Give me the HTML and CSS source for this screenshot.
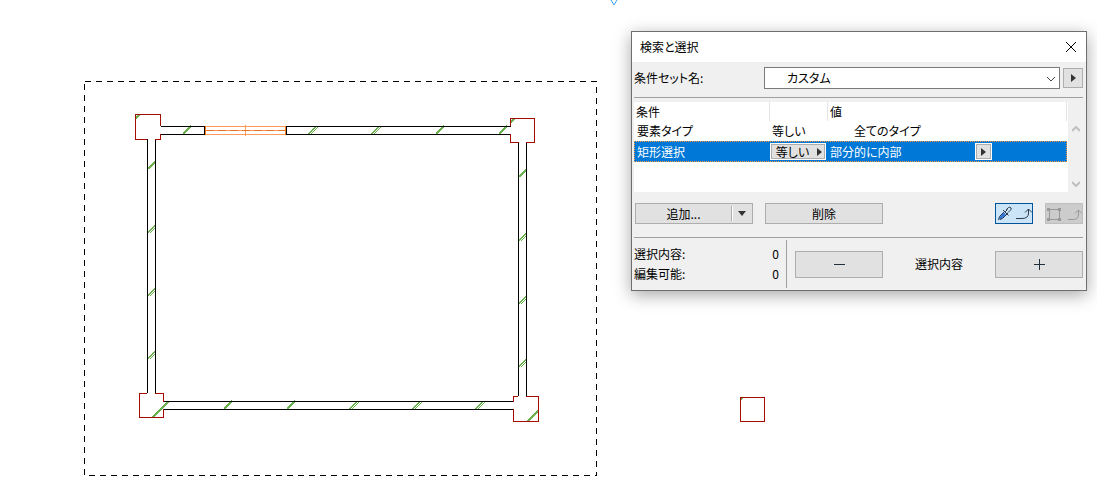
FILE: index.html
```html
<!DOCTYPE html>
<html lang="ja">
<head>
    <meta charset="UTF-8">
    <title>検索と選択</title>
    <link rel="stylesheet" href="styles.css">
</head>
<body>
    <main class="workspace">
        <svg class="plan" aria-hidden="true">
            <defs>
                <!-- hatch strokes across a wall -->
                <g id="hatch">
                    <path d="M0 8L8 0" stroke-width="2" />
                </g>
                <g id="hatch-double">
                    <path d="M0 8L8 0" />
                    <path d="M3 8L11 0" />
                    <path d="M1 8L9 0" />
                </g>
                <clipPath id="left-wall"><rect x="148" y="139" width="7" height="254" /></clipPath>
                <clipPath id="right-wall"><rect x="519" y="142" width="7" height="254" /></clipPath>
                <clipPath id="columns">
                    <rect x="136" y="115" width="24" height="24" />
                    <rect x="511" y="119" width="23" height="23" />
                    <rect x="140" y="402" width="30" height="15" />
                    <rect x="514" y="397" width="24" height="24" />
                    <rect x="741" y="398" width="23" height="23" />
                </clipPath>
            </defs>

            <!-- marker at the top edge -->
            <path class="marker" d="M611 0L614 5L617 0" />

            <!-- marquee -->
            <rect class="marquee" x="84.5" y="81.5" width="512" height="394" />

            <!-- hatching -->
            <g class="hatching">
                <use href="#hatch" x="183" y="126" />
                <use href="#hatch-double" x="308" y="126" />
                <use href="#hatch-double" x="371" y="126" />
                <use href="#hatch" x="436" y="126" />
                <use href="#hatch" x="499" y="126" />
                <use href="#hatch" x="224" y="401" />
                <use href="#hatch" x="287" y="401" />
                <use href="#hatch-double" x="349" y="401" />
                <use href="#hatch-double" x="412" y="401" />
                <use href="#hatch-double" x="475" y="401" />
                <g clip-path="url(#left-wall)">
                    <use href="#hatch" x="148" y="161" />
                    <use href="#hatch-double" x="147" y="225" />
                    <use href="#hatch-double" x="147" y="288" />
                    <use href="#hatch-double" x="147" y="351" />
                </g>
                <g clip-path="url(#right-wall)">
                    <use href="#hatch" x="519" y="169" />
                    <use href="#hatch-double" x="518" y="233" />
                    <use href="#hatch-double" x="518" y="296" />
                    <use href="#hatch-double" x="518" y="359" />
                </g>
                <g class="column-hatch" clip-path="url(#columns)">
                    <path d="M134 120L142 112M509 124L517 116M152 418L170 400M527 422L541 408M740 400L743 397" />
                </g>
            </g>

            <!-- walls -->
            <path class="wall" d="M161 126.5H204.500V134.500H161M511 126.500H286.500V134.500H511M163 401.500H513M163 409.500H513M147.500 139V393M155.500 139V393M518.500 142V396M526.500 142V396" />

            <!-- window -->
            <path class="window-frame" d="M206 126.500H286M206 134.500H286M206 130.500H286M245.500 125V136" />
            <path class="window-end" d="M205.500 126V135M285.500 126V135" />
            <path class="window-axis" d="M206 130.500H286" />

            <!-- columns -->
            <path class="column" d="M160.500 126V114.500H135.500V139.500H147M155 139.500H160.500V134" />
            <path class="column" d="M510.500 126V118.500H534.500V142.500H526M519 142.500H510.500V134" />
            <path class="column" d="M147 393.500H139.500V417.500H163.500V409M163.500 402V393.500H155" />
            <path class="column" d="M518 396.500H513.500V402M513.500 409V421.500H538.500V396.500H526" />
            <rect class="column" x="740.500" y="397.500" width="24" height="24" />
        </svg>

        <section class="dialog" role="dialog" aria-labelledby="dialog-title">
            <header class="title-bar">
                <h1 id="dialog-title">検索と選択</h1>
                <button type="button" class="close" aria-label="閉じる">
                    <svg width="12" height="12" viewBox="0 0 12 12"><path d="M1 1L11 11M11 1L1 11" /></svg>
                </button>
            </header>

            <div class="set-row">
                <label for="criteria-set">条件セット名:</label>
                <div class="select-box">
                    <select id="criteria-set">
                        <option>カスタム</option>
                    </select>
                    <svg class="chevron" width="10" height="6" viewBox="0 0 10 6"><path d="M1 1L5 5L9 1" /></svg>
                </div>
                <button type="button" class="btn arrow-btn" aria-label="条件セット">
                    <svg class="arrow" width="5" height="8" viewBox="0 0 5 8"><path d="M0 0L5 4L0 8z" /></svg>
                </button>
            </div>

            <div class="list">
                <div class="list-view">
                    <table class="criteria">
                        <colgroup>
                            <col class="col-name">
                            <col class="col-rule">
                            <col>
                        </colgroup>
                        <thead>
                            <tr>
                                <th>条件</th>
                                <th></th>
                                <th>値</th>
                            </tr>
                        </thead>
                        <tbody>
                            <tr>
                                <td>要素タイプ</td>
                                <td>等しい</td>
                                <td class="type-value">全てのタイプ</td>
                            </tr>
                            <tr class="selected">
                                <td>矩形選択</td>
                                <td class="rule-cell">
                                    <button type="button" class="btn cell-btn rule-btn">等しい
                                        <svg class="arrow" width="5" height="8" viewBox="0 0 5 8"><path d="M0 0L5 4L0 8z" /></svg>
                                    </button>
                                </td>
                                <td>
                                    <div class="value">
                                        <span>部分的に内部</span>
                                        <button type="button" class="btn cell-btn value-btn" aria-label="値">
                                            <svg class="arrow" width="5" height="8" viewBox="0 0 5 8"><path d="M0 0L5 4L0 8z" /></svg>
                                        </button>
                                    </div>
                                </td>
                            </tr>
                        </tbody>
                    </table>
                </div>
                <div class="scroll">
                    <svg width="8" height="6" viewBox="0 0 8 6"><path d="M0 5L4 1L8 5" /></svg>
                    <svg width="8" height="6" viewBox="0 0 8 6"><path d="M0 1L4 5L8 1" /></svg>
                </div>
            </div>

            <div class="actions">
                <div class="split">
                    <button type="button" class="btn">追加...</button>
                    <button type="button" class="btn split-menu" aria-label="追加メニュー">
                        <svg class="arrow" width="8" height="5" viewBox="0 0 8 5"><path d="M0 0H8L4 5z" /></svg>
                    </button>
                </div>
                <button type="button" class="btn">削除</button>
                <button type="button" class="btn pick" aria-label="設定を取得">
                    <svg width="36" height="19" viewBox="0 0 36 19">
                        <path class="dropper-ink" d="M3 15.500L4 12.500L8 8.500L10 10.500L6 14.500z" />
                        <path class="dropper" d="M2.500 16L3.500 12.500L9 7M4 15.500L6.500 14.500L12 9M7 6L12.500 11.500M10 6L12.500 3.500Q14 2.500 15 4T14 6.500L12 8.500M9 8L11.500 5.500" />
                        <path class="dropper" d="M20 14.500H26Q32.500 14.500 32.500 9V5M29 8.500L32.500 5L36 8.500" />
                    </svg>
                </button>
                <button type="button" class="btn area" aria-label="矩形を取得" disabled>
                    <svg width="36" height="19" viewBox="0 0 36 19">
                        <path class="area-line" d="M3.500 5.500H13.500V15.500H3.500zM22 15.500H27Q32.500 15.500 32.500 10V6M29 9.500L32.500 6L36 9.500" />
                        <path class="area-node" d="M1 4h3v3h-3zM12 4h3v3h-3zM1 14h3v3h-3zM12 14h3v3h-3z" />
                    </svg>
                </button>
            </div>

            <div class="selection">
                <dl class="counts">
                    <dt>選択内容:</dt>
                    <dd>0</dd>
                    <dt>編集可能:</dt>
                    <dd>0</dd>
                </dl>
                <div class="change">
                    <button type="button" class="btn" aria-label="選択から除外">
                        <svg width="11" height="11" viewBox="0 0 11 11"><path d="M0 5.500H11" /></svg>
                    </button>
                    <span>選択内容</span>
                    <button type="button" class="btn" aria-label="選択に追加">
                        <svg width="11" height="11" viewBox="0 0 11 11"><path d="M0 5.500H11M5.500 0V11" /></svg>
                    </button>
                </div>
            </div>
        </section>
    </main>
</body>
</html>
```

FILE: styles.css
```css
* {
    box-sizing: border-box;
}

body {
    margin: 0;
    background: #fff;
    color: #000;
    font-family: "Noto Sans CJK JP", sans-serif;
    font-size: 12px;
    line-height: 18px;
    font-feature-settings: "palt";
}

svg {
    display: block;
    fill: none;
    flex: none;
}

.workspace {
    position: relative;
    height: 100vh;
    overflow: hidden;
}

/* drawing */
.plan {
    width: 100%;
    height: 100%;
    shape-rendering: crispEdges;
}

.marker {
    stroke: #3d9bf0;
    shape-rendering: auto;
}

.marquee {
    stroke: #000;
    stroke-dasharray: 6 5;
}

.hatching {
    stroke: #6ab04f;
}

.column-hatch {
    stroke-width: 2;
}

.wall {
    stroke: #000;
}

.window-frame {
    stroke: #ff9c5a;
}

.window-end {
    stroke: #ff7a14;
}

.window-axis {
    stroke: #e8741e;
    stroke-dasharray: 8 4;
}

.column {
    stroke: #a80c00;
}

/* dialog */
.dialog {
    position: absolute;
    top: 31px;
    right: 10px;
    width: 456px;
    background: #f0f0f0;
    border: 1px solid #6e6e6e;
    box-shadow: 0 4px 16px rgba(0, 0, 0, 0.35);
}

.title-bar {
    display: flex;
    align-items: center;
    justify-content: space-between;
    height: 30px;
    padding: 0 8px;
    background: #fff;
}

.title-bar h1 {
    margin: 0;
    font-size: 12px;
    font-weight: normal;
}

.close {
    padding: 0 1px;
    border: 0;
    background: none;
    stroke: #000;
}

.set-row {
    display: flex;
    align-items: center;
    margin: 0 3px 0 2px;
    padding: 5px 0 8px;
    border-bottom: 1px solid #a0a0a0;
}

.set-row label {
    width: 130px;
}

.select-box {
    position: relative;
    flex: 1;
    margin-right: 3px;
}

.select-box select {
    display: block;
    width: 100%;
    height: 22px;
    padding: 0 20px 0 22px;
    border: 1px solid #7a7a7a;
    border-radius: 0;
    background: #fff;
    color: #000;
    font: inherit;
    font-feature-settings: inherit;
    appearance: none;
}

.chevron {
    position: absolute;
    top: 9px;
    right: 4px;
    stroke: #444;
    pointer-events: none;
}

.btn {
    display: flex;
    align-items: center;
    justify-content: center;
    height: 21px;
    padding: 0;
    border: 1px solid #adadad;
    border-radius: 0;
    background: #e1e1e1;
    color: #000;
    font: inherit;
    font-feature-settings: inherit;
}

.arrow {
    fill: #333;
}

.arrow-btn {
    width: 20px;
    height: 20px;
}

/* criteria list */
.list {
    display: flex;
    height: 90px;
    margin: 4px 3px 0 2px;
}

.list-view {
    flex: 1;
    padding-right: 1px;
    background: #fff;
}

.criteria {
    width: 100%;
    border-collapse: separate;
    border-spacing: 0;
    table-layout: fixed;
}

.col-name {
    width: 136px;
}

.col-rule {
    width: 58px;
}

.criteria th,
.criteria td {
    height: 20px;
    padding: 0 2px;
    font-weight: normal;
    text-align: left;
    line-height: 18px;
}

.criteria th {
    height: 19px;
    border-right: 1px solid #e5e5e5;
}

.criteria td:first-child {
    padding-left: 3px;
}

.criteria .type-value {
    padding-left: 26px;
}

.criteria .selected td {
    height: 21px;
    line-height: 17px;
}

.selected {
    background: #0078d7;
    color: #fff;
    outline: 1px dotted #ff9a3c;
    outline-offset: -1px;
}

.criteria .rule-cell {
    padding: 0 1px;
}

.cell-btn {
    height: 15px;
    outline: 1px solid #fff;
}

.rule-btn {
    width: 54px;
    gap: 8px;
    padding-left: 2px;
    line-height: 13px;
}

.value {
    display: flex;
    align-items: center;
    justify-content: space-between;
    padding-right: 74px;
}

.value-btn {
    width: 15px;
}

.scroll {
    display: flex;
    flex-direction: column;
    align-items: center;
    justify-content: space-between;
    width: 15px;
    padding: 24px 0 5px;
    stroke: #bfbfbf;
    stroke-width: 2;
}

/* buttons */
.actions {
    display: grid;
    grid-template-columns: 118px 118px 1fr 38px 38px;
    column-gap: 12px;
    margin: 0 3px 0 2px;
    padding: 11px 0 13px 1px;
    border-bottom: 1px solid #a0a0a0;
}

.actions .pick {
    grid-column: 4;
    border-color: #005499;
    background: #cce4f7;
}

.actions .area {
    border-color: #bfbfbf;
    background: #ccc;
}

.split {
    display: flex;
    border: 1px solid #adadad;
    background: #e1e1e1;
}

.split .btn {
    flex: 1;
    height: 19px;
    border: 0;
}

.split .split-menu {
    flex: none;
    width: 21px;
    height: 15px;
    margin: 2px 0;
    border-left: 1px solid #adadad;
    box-shadow: inset 1px 0 #fff;
}

.dropper-ink {
    fill: #2f73d8;
}

.dropper {
    stroke: #2b3b4b;
}

.area-line {
    stroke: #999;
}

.area-node {
    fill: #999;
}

/* selection counts */
.selection {
    display: flex;
    margin: 0 3px 0 2px;
    padding: 2px 0;
}

.counts {
    display: grid;
    grid-template-columns: 1fr auto;
    width: 153px;
    height: 48px;
    margin: 0;
    padding: 4px 7px 4px 0;
    border-right: 1px solid #a0a0a0;
    line-height: 20px;
}

.counts dd {
    margin: 0;
}

.change {
    display: grid;
    grid-template-columns: 88px 1fr 88px;
    flex: 1;
    align-items: center;
    padding-left: 8px;
    text-align: center;
}

.change .btn {
    height: 27px;
    stroke: #22303c;
}
```
